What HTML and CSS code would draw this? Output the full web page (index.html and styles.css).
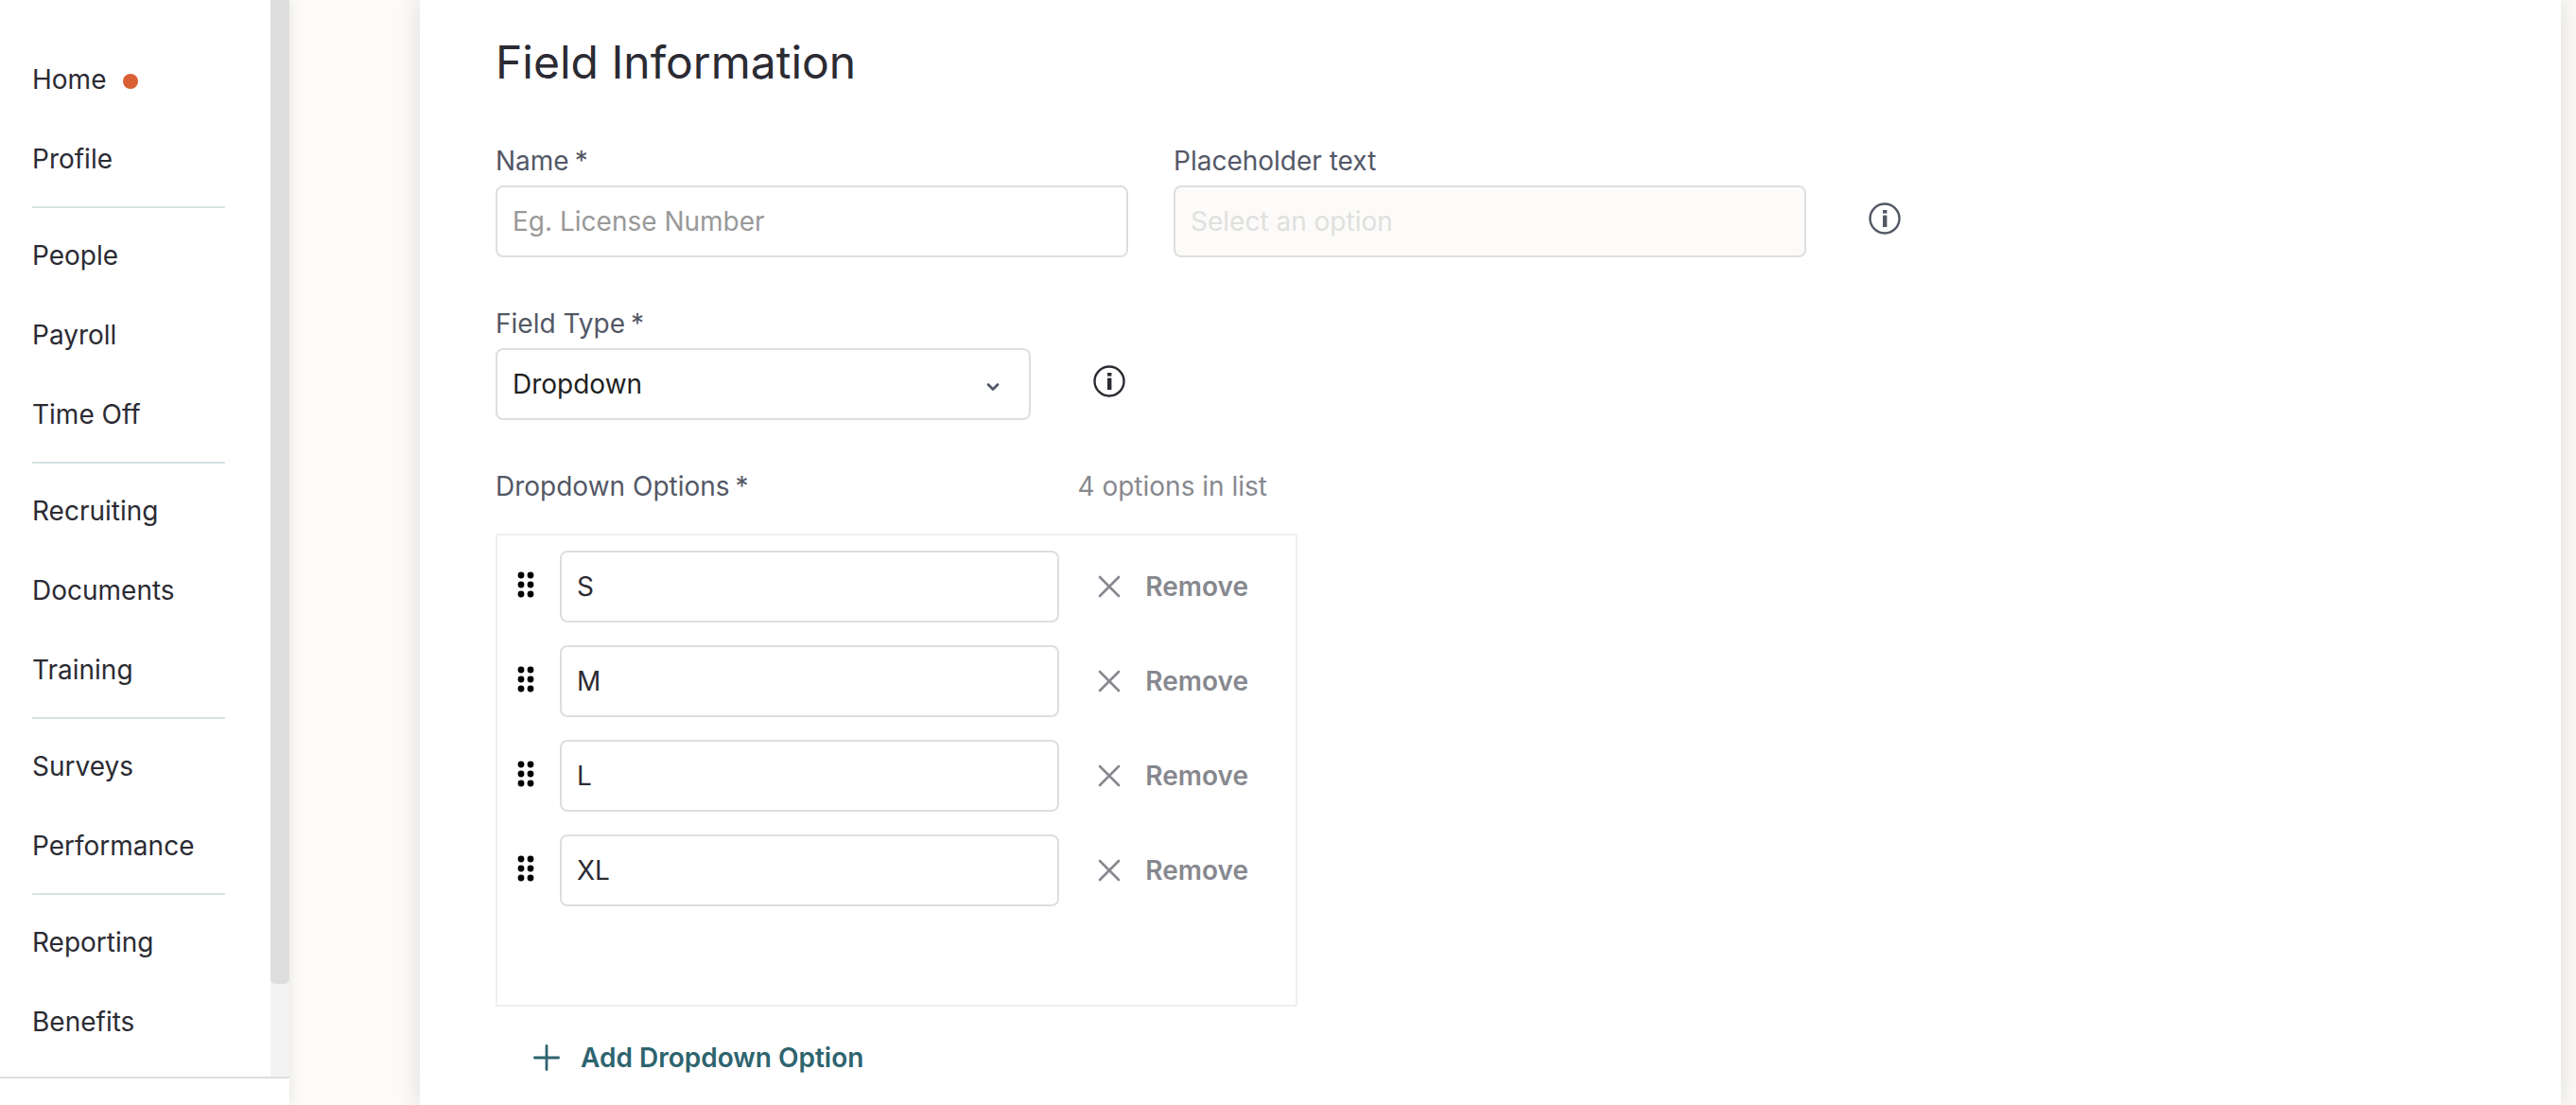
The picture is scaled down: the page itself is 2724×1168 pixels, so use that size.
FILE: index.html
```html
<!DOCTYPE html>
<html lang="en">
<head>
<meta charset="utf-8">
<meta name="viewport" content="width=device-width, initial-scale=1">
<title>Field Information</title>
<link rel="stylesheet" href="styles.css">
</head>
<body>
<svg class="sprite" aria-hidden="true">
  <symbol id="info" viewBox="0 0 34 34">
    <circle cx="17" cy="17" r="15.5" fill="none" stroke="currentColor" stroke-width="2.4"/>
    <rect x="15" y="8" width="4.4" height="3.6" fill="currentColor"/>
    <rect x="15" y="13.6" width="4.4" height="12.4" fill="currentColor"/>
  </symbol>
  <symbol id="grip" viewBox="0 0 18 28">
    <circle cx="4" cy="4" r="3.4"/><circle cx="14" cy="4" r="3.4"/>
    <circle cx="4" cy="14" r="3.4"/><circle cx="14" cy="14" r="3.4"/>
    <circle cx="4" cy="24" r="3.4"/><circle cx="14" cy="24" r="3.4"/>
  </symbol>
  <symbol id="cross" viewBox="0 0 24 24">
    <path d="M2 2L22 22M22 2L2 22" fill="none" stroke="currentColor" stroke-width="2.6" stroke-linecap="round"/>
  </symbol>
  <symbol id="plus" viewBox="0 0 28 28">
    <path d="M14 1.4V26.6M1.4 14H26.6" fill="none" stroke="currentColor" stroke-width="2.8" stroke-linecap="round"/>
  </symbol>
  <symbol id="chevron" viewBox="0 0 16 10">
    <path d="M3 2.4L8 7.4L13 2.4" fill="none" stroke="currentColor" stroke-width="2.8" stroke-linecap="round" stroke-linejoin="round"/>
  </symbol>
</svg>
<div class="app">
  <aside class="sidebar">
    <div class="scroller">
      <nav class="nav" aria-label="Main">
        <ul class="group">
          <li><a href="#home">Home <span class="dot"></span></a></li>
          <li><a href="#profile">Profile</a></li>
        </ul>
        <ul class="group">
          <li><a href="#people">People</a></li>
          <li><a href="#payroll">Payroll</a></li>
          <li><a href="#time-off">Time Off</a></li>
        </ul>
        <ul class="group">
          <li><a href="#recruiting">Recruiting</a></li>
          <li><a href="#documents">Documents</a></li>
          <li><a href="#training">Training</a></li>
        </ul>
        <ul class="group">
          <li><a href="#surveys">Surveys</a></li>
          <li><a href="#performance">Performance</a></li>
        </ul>
        <ul class="group">
          <li><a href="#reporting">Reporting</a></li>
          <li><a href="#benefits">Benefits</a></li>
        </ul>
      </nav>
      <div class="track"><div class="thumb"></div></div>
    </div>
    <div class="sidebar-foot"></div>
  </aside>
  <main class="main">
    <form class="card">
      <h1 class="title">Field Information</h1>
      <div class="row">
        <div class="field wide">
          <label for="name">Name<span class="required">*</span></label>
          <input class="control" id="name" type="text" placeholder="Eg. License Number">
        </div>
        <div class="field wide">
          <label for="placeholder">Placeholder text</label>
          <input class="control" id="placeholder" type="text" placeholder="Select an option" disabled>
        </div>
        <button class="info muted" type="button" aria-label="About placeholder text"><svg><use href="#info"/></svg></button>
      </div>
      <div class="row">
        <div class="field type">
          <label for="type">Field Type<span class="required">*</span></label>
          <div class="select">
            <select class="control" id="type"><option>Dropdown</option></select>
            <svg class="chevron"><use href="#chevron"/></svg>
          </div>
        </div>
        <button class="info" type="button" aria-label="About field type"><svg><use href="#info"/></svg></button>
      </div>
      <section class="options">
        <div class="options-head">
          <span>Dropdown Options<span class="required">*</span></span>
          <span class="count">4 options in list</span>
        </div>
        <ul class="list">
          <li class="option"><svg class="grip"><use href="#grip"/></svg><input class="control" type="text" value="S" aria-label="Option 1"><button class="remove" type="button"><svg><use href="#cross"/></svg>Remove</button></li>
          <li class="option"><svg class="grip"><use href="#grip"/></svg><input class="control" type="text" value="M" aria-label="Option 2"><button class="remove" type="button"><svg><use href="#cross"/></svg>Remove</button></li>
          <li class="option"><svg class="grip"><use href="#grip"/></svg><input class="control" type="text" value="L" aria-label="Option 3"><button class="remove" type="button"><svg><use href="#cross"/></svg>Remove</button></li>
          <li class="option"><svg class="grip"><use href="#grip"/></svg><input class="control" type="text" value="XL" aria-label="Option 4"><button class="remove" type="button"><svg><use href="#cross"/></svg>Remove</button></li>
        </ul>
        <button class="add" type="button"><svg><use href="#plus"/></svg>Add Dropdown Option</button>
      </section>
    </form>
  </main>
</div>
</body>
</html>
```
FILE: styles.css
```css
* {
  box-sizing: border-box;
}

body {
  margin: 0;
  background: #fcfbf9;
  color: #2b2b33;
  font: 28px/36px Inter, "Liberation Sans", sans-serif;
}

ul {
  margin: 0;
  padding: 0;
  list-style: none;
}

button {
  padding: 0;
  border: 0;
  background: none;
  color: inherit;
  font: inherit;
}

.sprite {
  display: none;
}

.app {
  display: flex;
  height: 100vh;
  overflow: hidden;
}

.sidebar {
  display: flex;
  flex-direction: column;
  flex: none;
  width: 306px;
  background: #fff;
  box-shadow: 0 0 12px rgba(56, 49, 47, 0.12);
}

.scroller {
  display: flex;
  flex: 1;
  min-height: 0;
}

.nav {
  flex: 1;
  padding: 42px 48px 0 34px;
  overflow: hidden;
}

.group + .group {
  border-top: 2px solid #d5e3e3;
  margin-top: 8px;
  padding-top: 8px;
}

.nav a {
  display: flex;
  align-items: center;
  height: 84px;
  color: inherit;
  text-decoration: none;
}

.dot {
  width: 16px;
  height: 16px;
  margin: 4px 0 0 18px;
  border-radius: 50%;
  background: #da5f34;
}

.track {
  width: 20px;
  padding-bottom: 98px;
  background: #f4f4f4;
}

.thumb {
  height: 100%;
  border-radius: 0 0 5px 5px;
  background: #dedede;
}

.sidebar-foot {
  height: 30px;
  border-top: 2px solid #dedede;
}

.main {
  display: flex;
  flex: 1;
  padding: 0 16px 0 138px;
}

.card {
  flex: 1;
  padding: 34px 80px;
  background: #fff;
  box-shadow: 0 0 24px rgba(56, 49, 47, 0.16);
}

.title {
  margin: 0 0 54px;
  font-size: 48px;
  font-weight: 400;
  line-height: 64px;
}

.row {
  display: flex;
  align-items: flex-end;
  margin-bottom: 52px;
}

.field {
  display: flex;
  flex-direction: column;
  gap: 8px;
  color: #535866;
}

.required {
  margin-left: 6px;
}

.wide {
  flex: 0 1 669px;
}

.wide + .wide {
  margin-left: 48px;
}

.type {
  flex: 0 1 566px;
}

.control {
  width: 100%;
  height: 76px;
  padding: 0 16px;
  border: 2px solid #dedede;
  border-radius: 8px;
  background: #fff;
  color: #2b2b33;
  font: inherit;
}

.control::placeholder {
  color: #999;
  opacity: 1;
}

.control:disabled {
  background: #fcfbf9;
}

.control:disabled::placeholder {
  color: #e0e0de;
}

.select {
  display: grid;
  align-items: center;
}

.select > * {
  grid-area: 1 / 1;
}

.select .control {
  appearance: none;
  color: #1f1f1f;
}

.chevron {
  justify-self: end;
  width: 16px;
  height: 10px;
  margin: 6px 32px 0 0;
  pointer-events: none;
}

.info {
  width: 34px;
  height: 34px;
  margin: 0 0 24px 66px;
}

.info svg {
  display: block;
  width: 34px;
  height: 34px;
}

.muted {
  color: #535866;
}

.options {
  max-width: 848px;
}

.options-head {
  display: flex;
  justify-content: space-between;
  padding: 0 32px 32px 0;
  color: #535866;
}

.count {
  color: #87888f;
}

.list {
  display: flex;
  flex-direction: column;
  gap: 24px;
  min-height: 500px;
  padding: 16px 50px 16px 20px;
  border: 2px solid #efefef;
}

.option {
  display: flex;
  align-items: center;
}

.grip {
  flex: none;
  width: 20px;
  height: 28px;
  margin: 0 26px 4px 0;
}

.option .control {
  flex: 1;
  min-width: 0;
}

.remove,
.add {
  display: flex;
  align-items: center;
  font-weight: 600;
}

.remove {
  gap: 26px;
  margin-left: 41px;
  color: #87888f;
}

.remove svg {
  width: 24px;
  height: 24px;
}

.add {
  gap: 22px;
  margin: 36px 0 0 40px;
  color: #2e646f;
}

.add svg {
  width: 28px;
  height: 28px;
}
```
